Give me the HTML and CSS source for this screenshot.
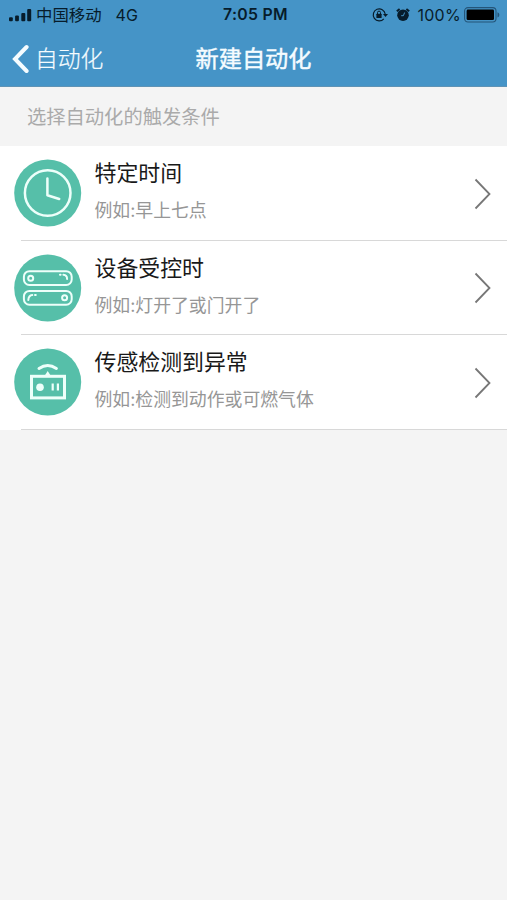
FILE: index.html
```html
<!DOCTYPE html>
<html lang="zh-CN">
<head>
<meta charset="utf-8">
<title>新建自动化</title>
<link rel="stylesheet" href="styles.css">
</head>
<body>
<header class="top">
  <div class="status">
    <div class="status-left">
      <svg class="signal" width="24" height="14" viewBox="0 0 24 14"><rect x="0" y="9.3" width="3.8" height="3.9" rx="1"/><rect x="6.1" y="7.4" width="3.8" height="5.8" rx="1"/><rect x="12.3" y="4.9" width="4" height="8.3" rx="1"/><rect x="18.2" y="1" width="4" height="12.2" rx="1"/></svg>
      <span class="carrier">中国移动</span>
      <span class="network">4G</span>
    </div>
    <span class="clock">7:05 PM</span>
    <div class="status-right">
      <svg class="lock" width="16" height="16" viewBox="0 0 16 16"><path d="M11.8 11.8A6 6 0 1 1 13.2 7" fill="none" stroke="#071c2b" stroke-width="1.2"/><path d="M11 7h5l-2.5 3z"/><rect x="4.4" y="6.8" width="5.2" height="4.3" rx=".5"/><path d="M5.5 7V5.6a1.5 1.5 0 0 1 3 0V7" fill="none" stroke="#071c2b"/></svg>
      <svg class="alarm" width="14" height="14" viewBox="0 0 14 14"><circle cx="7" cy="7.2" r="5.8"/><path d="M.8 3.2L3.6 1M13.2 3.2L10.4 1" fill="none" stroke="#071c2b" stroke-width="1.9"/><path d="M8.6 4.5L7.4 7.7H5.2" fill="none" stroke="#4594c7" stroke-width="1"/></svg>
      <span class="percent">100%</span>
      <svg class="battery" width="36" height="16" viewBox="0 0 36 16"><rect x=".6" y=".6" width="31.4" height="14.4" rx="3.4" fill="none" stroke="#245579" stroke-width="1.1"/><rect x="2.6" y="2.6" width="27.4" height="10.4" rx="1.3" fill="#000"/><path d="M33.5 5.2c2.4.8 2.4 4.4 0 5.2z" fill="#245579"/></svg>
    </div>
  </div>
  <nav class="nav">
    <div class="back">
      <svg width="18" height="30" viewBox="0 0 18 30"><path d="M15.6 3L4 15 15.6 27" fill="none" stroke="#f5fcff" stroke-width="4" stroke-linecap="round" stroke-linejoin="miter"/></svg>
      <span>自动化</span>
    </div>
    <h1 class="title">新建自动化</h1>
  </nav>
</header>
<main>
  <p class="hint">选择自动化的触发条件</p>
  <ul class="list">
    <li class="row">
      <svg class="icon" viewBox="0 0 68 68"><circle class="disc" cx="33.7" cy="34" r="33.5"/><g class="line"><circle cx="33.7" cy="34" r="22.8"/><path d="M33.4 19.5V36.3L45.2 40"/></g></svg>
      <div class="text"><h2>特定时间</h2><p>例如:早上七点</p></div>
      <svg class="chevron" viewBox="0 0 18 32"><path d="M1.5 1.5L15.5 16 1.5 30.5"/></svg>
    </li>
    <li class="row">
      <svg class="icon" viewBox="0 0 68 68"><circle class="disc" cx="33.7" cy="34" r="33.5"/><g class="line thin"><rect x="9.9" y="17.2" width="47.8" height="13.8" rx="5.5"/><rect x="9.9" y="36.9" width="47.8" height="13.8" rx="5.5"/><circle cx="16.7" cy="24.3" r="2.5"/><circle cx="50.6" cy="43.8" r="2.5"/><path d="M46 20.8h.6M49.4 20.8q3.7.2 3.7 4.2M14.3 46q.3-4.5 4-4.9M21 41h.8"/></g></svg>
      <div class="text"><h2>设备受控时</h2><p>例如:灯开了或门开了</p></div>
      <svg class="chevron" viewBox="0 0 18 32"><path d="M1.5 1.5L15.5 16 1.5 30.5"/></svg>
    </li>
    <li class="row">
      <svg class="icon" viewBox="0 0 68 68"><circle class="disc" cx="33.7" cy="34" r="33.5"/><g class="line"><path d="M25 20.4Q33.7 14.6 42.4 20.4" stroke-width="3"/><rect x="17.5" y="28.3" width="33" height="21.6" stroke-width="3" stroke-linejoin="miter"/><path d="M38.7 35.5v7M43.9 35.5v7" stroke-width="2.2" stroke-linecap="butt"/></g><path class="fill" d="M33.7 23l3.2 5h-6.4z"/><circle class="fill" cx="26" cy="39.2" r="3.8"/></svg>
      <div class="text"><h2>传感检测到异常</h2><p>例如:检测到动作或可燃气体</p></div>
      <svg class="chevron" viewBox="0 0 18 32"><path d="M1.5 1.5L15.5 16 1.5 30.5"/></svg>
    </li>
  </ul>
</main>
</body>
</html>
```
FILE: styles.css
```css
* { box-sizing: border-box; margin: 0; padding: 0; }
svg { display: block; flex: none; }
body {
  min-height: 900px;
  background: #f4f4f4;
  font-family: Inter, "Noto Sans CJK SC", sans-serif;
}
.top { height: 87px; background: #4594c7; border-bottom: 1px solid #5f93b5; }
.status, .nav {
  display: grid;
  grid-template-columns: 1fr auto 1fr;
  align-items: center;
}
.status {
  height: 30px;
  padding: 0 7px 0 9px;
  color: #071c2b;
  fill: #071c2b;
  font-size: 16.4px;
  line-height: 30px;
}
.status-left, .status-right { display: flex; align-items: center; }
.status-right { justify-content: flex-end; }
.carrier { margin-left: 3px; }
.network { margin-left: 14px; font-size: 16px; }
.clock { padding-left: 2px; font-size: 15.8px; font-weight: 600; letter-spacing: .3px; }
.alarm { margin-left: 8px; }
.percent { margin-left: 7px; font-size: 16px; letter-spacing: .3px; }
.battery { margin-left: 3px; }
.nav { height: 57px; padding: 0 11px; color: #f5fcff; }
.back { display: flex; align-items: center; gap: 6px; font-size: 22.8px; font-weight: 300; line-height: 34px; -webkit-text-stroke: .2px #f5fcff; }
.title { font-size: 23.2px; font-weight: 400; line-height: 34px; -webkit-text-stroke: .45px #f5fcff; }
.hint {
  height: 59px;
  padding-left: 27px;
  color: #aaa;
  font-size: 19.3px;
  line-height: 61px;
}
.list { list-style: none; background: #fff; }
.row {
  display: flex;
  align-items: center;
  height: 94.5px;
  padding: 0 15px 0 14px;
  background: linear-gradient(#d8d8d8, #d8d8d8) 21px 100% / 100% 1px no-repeat;
}
.icon { width: 68px; height: 68px; }
.disc { fill: #56bfa9; }
.line { fill: none; stroke: #edfffa; stroke-width: 2.5; stroke-linecap: round; stroke-linejoin: round; }
.thin { stroke-width: 2; }
.fill { fill: #edfffa; }
.text { flex: 1; margin-left: 12.5px; padding-bottom: 4px; }
.text h2 { color: #191919; font-size: 21.9px; font-weight: 400; line-height: 32px; }
.text p { margin-top: 8px; color: #969696; font-size: 17.85px; line-height: 28px; }
.chevron { width: 18px; height: 32px; margin-top: 1px; fill: none; stroke: #777; stroke-width: 1.8; }
```
